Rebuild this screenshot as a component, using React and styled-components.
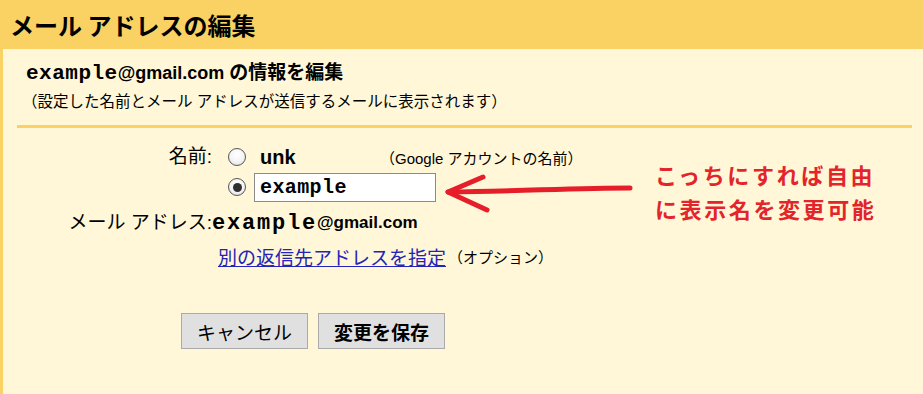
import React from 'react';
import styled, { createGlobalStyle } from 'styled-components';

const GlobalStyle = createGlobalStyle`
  html, body {
    margin: 0;
    padding: 0;
    background: #fff7d8;
  }
  body {
    font-family: "Liberation Sans", "Noto Sans CJK JP", sans-serif;
    color: #000;
  }
`;

const Page = styled.div`
  position: relative;
  width: 923px;
  height: 394px;
  overflow: hidden;
  display: flex;
  flex-direction: column;
`;

const Header = styled.div`
  height: 49px;
  background: #fad163;
  display: flex;
  align-items: center;
  padding-left: 10px;
  flex-shrink: 0;
`;

const Title = styled.h1`
  margin: 0;
  font-size: 24px;
  font-weight: bold;
  line-height: 28px;
  font-family: "Noto Sans CJK JP", sans-serif;
`;

const Panel = styled.div`
  flex: 1;
  background: #fff7d8;
  border-left: 3px solid #fad163;
  padding-top: 12px;
`;

const Intro = styled.div`
  padding-left: 23px;
`;

const Heading = styled.div`
  font-size: 18px;
  font-weight: bold;
  line-height: 24px;
  white-space: nowrap;
`;

const HeadingTail = styled.span`
  font-size: 19px;
`;

const Mono = styled.span`
  font-family: "Liberation Mono", monospace;
  font-weight: bold;
  font-size: ${(p) => p.$size || 20}px;
  letter-spacing: ${(p) => p.$spacing || 0}px;
`;

const Note = styled.div`
  margin-top: 6px;
  font-size: 15.5px;
  line-height: 20px;
  white-space: nowrap;
  margin-left: -4px;
`;

const Divider = styled.div`
  height: 3px;
  background: #fad163;
  margin: 13px 11px 0 14px;
`;

const FormGrid = styled.div`
  display: grid;
  grid-template-columns: 209px 1fr;
  margin-top: 15px;
`;

const Label = styled.div`
  font-size: 19px;
  text-align: right;
  height: ${(p) => p.$h}px;
  line-height: ${(p) => p.$h}px;
  margin-top: ${(p) => p.$mt || 0}px;
  white-space: nowrap;
`;

const Field = styled.div`
  display: flex;
  align-items: center;
  height: ${(p) => p.$h}px;
  margin-top: ${(p) => p.$mt || 0}px;
  padding-left: ${(p) => p.$pl || 0}px;
  white-space: nowrap;
`;

const Radio = styled.span`
  width: 18px;
  height: 18px;
  border-radius: 50%;
  border: 1px solid #555;
  background: radial-gradient(circle at 50% 35%, #ffffff 0%, #f4f4f4 55%, #d8d8d8 100%);
  box-sizing: border-box;
  display: flex;
  align-items: center;
  justify-content: center;
  flex-shrink: 0;
  margin-right: 8px;

  &::after {
    content: '';
    width: 9px;
    height: 9px;
    border-radius: 50%;
    background: ${(p) => (p.$checked ? '#2f2f2f' : 'transparent')};
  }
`;

const NameCell = styled.span`
  width: 128px;
  padding-left: 6px;
  font-size: 20px;
  font-weight: bold;
`;

const Hint = styled.span`
  font-size: 15px;
  margin-left: -8px;
`;

const NameInput = styled.div`
  width: 182px;
  height: 29px;
  box-sizing: border-box;
  border: 1px solid #8a8a8a;
  background: #fff;
  padding-left: 5px;
  display: flex;
  align-items: center;
`;

const Email = styled.span`
  font-size: 17px;
  font-weight: bold;
`;

const Link = styled.a`
  color: #2424b8;
  text-decoration: underline;
  font-size: 19px;
  cursor: pointer;
`;

const Optional = styled.span`
  font-size: 15px;
  margin-left: 2px;
`;

const Buttons = styled.div`
  grid-column: 1 / 3;
  display: flex;
  gap: 10px;
  margin-top: 44px;
  padding-left: 178px;
`;

const Button = styled.button`
  width: 127px;
  height: 36px;
  background: #e0e0e0;
  border: 1px solid #aaaaaa;
  border-radius: 0;
  font-family: "Noto Sans CJK JP", sans-serif;
  font-size: 19px;
  font-weight: ${(p) => (p.$primary ? 'bold' : 'normal')};
  color: #000;
  padding: 0;
`;

const Annotation = styled.div`
  position: absolute;
  left: 655px;
  top: 157px;
  color: #e3242b;
  font-family: "Noto Sans CJK JP", sans-serif;
  font-size: 22px;
  font-weight: bold;
  line-height: 34px;
  letter-spacing: 2.6px;
`;

const Arrow = styled.svg`
  position: absolute;
  left: 440px;
  top: 165px;
`;

export default function App() {
  return (
    <Page>
      <GlobalStyle />
      <Header>
        <Title>メール アドレスの編集</Title>
      </Header>
      <Panel>
        <Intro>
          <Heading>
            <Mono $size={21} $spacing={0.5}>example</Mono>@gmail.com <HeadingTail>の情報を編集</HeadingTail>
          </Heading>
          <Note>（設定した名前とメール アドレスが送信するメールに表示されます）</Note>
        </Intro>
        <Divider />
        <FormGrid>
          <Label $h={28}>名前:</Label>
          <Field $h={28} $pl={16}>
            <Radio />
            <NameCell>unk</NameCell>
            <Hint>（Google アカウントの名前）</Hint>
          </Field>

          <Label $h={30} $mt={1} />
          <Field $h={30} $mt={1} $pl={16}>
            <Radio $checked />
            <NameInput>
              <Mono $spacing={0.4}>example</Mono>
            </NameInput>
          </Field>

          <Label $h={28} $mt={7}>メール アドレス:</Label>
          <Field $h={28} $mt={7}>
            <Mono $size={22} $spacing={1.8}>example</Mono>
            <Email>@gmail.com</Email>
          </Field>

          <Label $h={26} $mt={6} />
          <Field $h={26} $mt={6} $pl={6}>
            <Link>別の返信先アドレスを指定</Link>
            <Optional>（オプション）</Optional>
          </Field>

          <Buttons>
            <Button>キャンセル</Button>
            <Button $primary>変更を保存</Button>
          </Buttons>
        </FormGrid>
      </Panel>

      <Arrow width="200" height="55" viewBox="0 0 200 55">
        <g fill="none" stroke="#e61e2a" strokeWidth="5" strokeLinecap="round" strokeLinejoin="round">
          <path d="M190 23 C 140 23, 80 26, 8 27" />
          <path d="M43 12 L 8 27 L 47 45" />
        </g>
      </Arrow>
      <Annotation>
        こっちにすれば自由
        <br />
        に表示名を変更可能
      </Annotation>
    </Page>
  );
}
